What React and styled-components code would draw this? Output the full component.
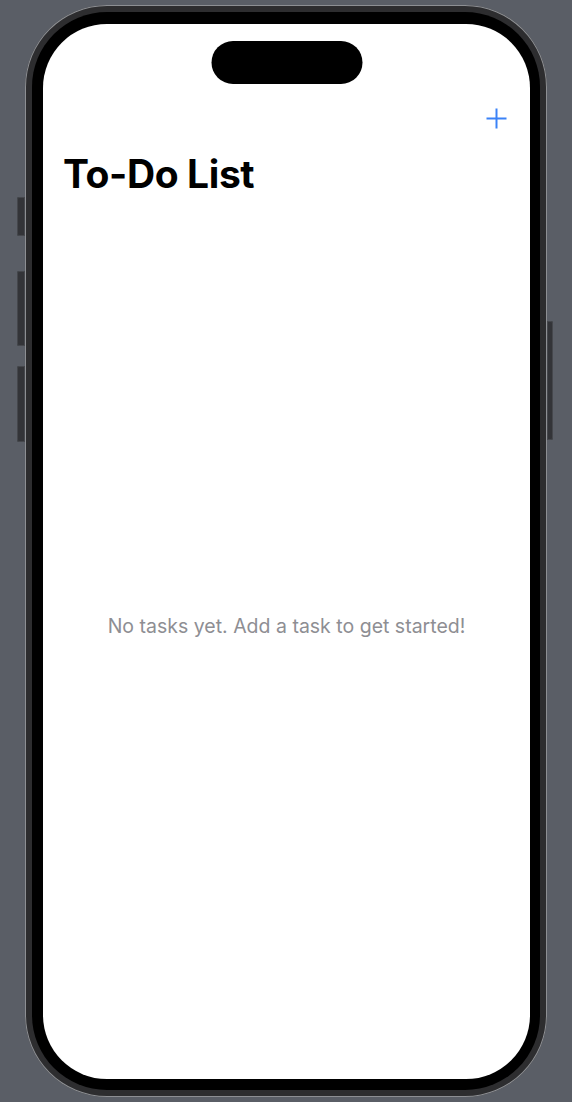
import React from "react";
import styled, { createGlobalStyle } from "styled-components";

const Global = createGlobalStyle`
  html, body { margin: 0; padding: 0; background: #5a5e66; }
  body { font-family: Inter, "Noto Sans", "Liberation Sans", sans-serif; }
  #root { width: 572px; height: 1102px; }
`;

const Stage = styled.div`
  width: 572px;
  height: 1102px;
  display: flex;
  align-items: center;
  justify-content: center;
  background: #5a5e66;
`;

const Phone = styled.div`
  position: relative;
  box-sizing: border-box;
  width: 522px;
  height: 1092px;
  padding: 7px;
  border-radius: 82px;
  background: #2d2d2f;
  box-shadow: inset 0 0 0 1px #8d8f93;
  display: flex;
`;

const SideButton = styled.div`
  position: absolute;
  ${(p) => (p.$side === "left" ? "left: -8px;" : "right: -6px;")}
  top: ${(p) => p.$top}px;
  width: ${(p) => (p.$side === "left" ? 8 : 6)}px;
  height: ${(p) => p.$height}px;
  background: #333438;
  border-radius: ${(p) => (p.$side === "left" ? "2px 0 0 2px" : "0 2px 2px 0")};
  box-shadow: inset 0 0 0 1px #45474c;
`;

const Bezel = styled.div`
  flex: 1;
  display: flex;
  padding: 12px 10px 11px 11px;
  border-radius: 75px;
  background: #000;
`;

const Screen = styled.div`
  position: relative;
  flex: 1;
  display: flex;
  flex-direction: column;
  background: #fff;
  border-radius: 64px;
  overflow: hidden;
`;

const Island = styled.div`
  position: absolute;
  top: 17px;
  left: 50%;
  transform: translateX(-50%);
  width: 151px;
  height: 43px;
  border-radius: 22px;
  background: #000;
`;

const NavBar = styled.div`
  display: flex;
  justify-content: flex-end;
  padding: 84px 23px 0 0;
`;

const AddButton = styled.button`
  width: 21px;
  height: 21px;
  padding: 0;
  border: none;
  background: none;
  display: flex;
  color: #3b82f7;
  cursor: pointer;
`;

const Title = styled.h1`
  margin: 22px 0 0 20px;
  font-size: 39px;
  line-height: 46px;
  font-weight: 700;
  letter-spacing: -0.4px;
  color: #000;
`;

const Empty = styled.div`
  flex: 1;
  display: flex;
  align-items: center;
  justify-content: center;
  padding-bottom: 24px;
`;

const EmptyText = styled.p`
  margin: 0;
  font-size: 19.5px;
  color: #8e8e93;
`;

export default function App() {
  return (
    <>
      <Global />
      <Stage>
        <Phone>
          <SideButton $side="left" $top={192} $height={39} />
          <SideButton $side="left" $top={266} $height={75} />
          <SideButton $side="left" $top={361} $height={76} />
          <SideButton $side="right" $top={316} $height={119} />
          <Bezel>
            <Screen>
              <Island />
              <NavBar>
                <AddButton aria-label="Add task">
                  <svg width="21" height="21" viewBox="0 0 21 21">
                    <path d="M10.5 0.5v20M0.5 10.5h20" stroke="currentColor" strokeWidth="2" fill="none" />
                  </svg>
                </AddButton>
              </NavBar>
              <Title>To-Do List</Title>
              <Empty>
                <EmptyText>No tasks yet. Add a task to get started!</EmptyText>
              </Empty>
            </Screen>
          </Bezel>
        </Phone>
      </Stage>
    </>
  );
}
